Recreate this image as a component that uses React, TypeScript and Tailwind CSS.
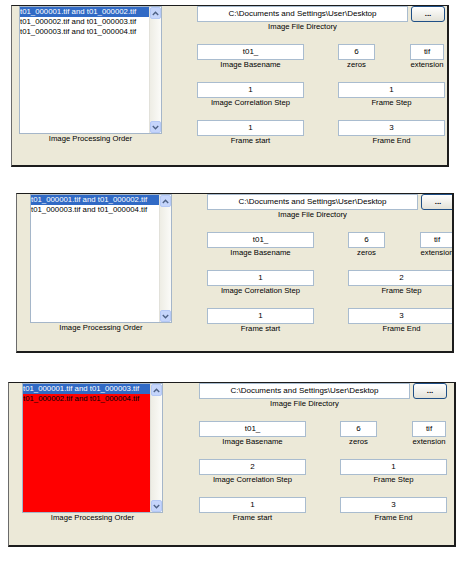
import React from 'react';

type PanelProps = {
  className: string;
  padLeft: string;
  listWidth: string;
  listHeight: string;
  gap: string;
  items: string[];
  red?: boolean;
  corrStep: string;
  frameStep: string;
  frameStart: string;
  frameEnd: string;
};

const font = { fontFamily: '"Liberation Sans", Arial, sans-serif' };

const Field: React.FC<{ value: string; className?: string }> = ({ value, className = '' }) => (
  <div
    className={`h-[16px] bg-white border border-[#a9bccf] flex items-center justify-center text-[8px] leading-none text-black whitespace-nowrap overflow-hidden ${className}`}
  >
    {value}
  </div>
);

const Label: React.FC<{ children: React.ReactNode }> = ({ children }) => (
  <div className="h-[10px] text-[7.7px] leading-[10px] text-center text-black whitespace-nowrap">{children}</div>
);

const Chevron: React.FC<{ down?: boolean }> = ({ down }) => (
  <svg width="7" height="5" viewBox="0 0 7 5">
    <path
      d={down ? 'M0.8 1 L3.5 3.7 L6.2 1' : 'M0.8 4 L3.5 1.3 L6.2 4'}
      fill="none"
      stroke="#4d6185"
      strokeWidth="1.4"
    />
  </svg>
);

const ScrollButton: React.FC<{ down?: boolean }> = ({ down }) => (
  <div className="h-[12px] w-[11px] mx-auto rounded-[2px] bg-[#c5d5fb] border border-[#b4c8f6] flex items-center justify-center">
    <Chevron down={down} />
  </div>
);

const Scrollbar = () => (
  <div className="w-[12px] shrink-0 flex flex-col justify-between bg-gradient-to-r from-[#eeede5] to-[#fbfbf8] border-l border-[#e2e1da]">
    <ScrollButton />
    <ScrollButton down />
  </div>
);

const ListBox: React.FC<{ items: string[]; red?: boolean; height: string }> = ({ items, red, height }) => (
  <div className={`${height} border border-[#a5b6c9] flex ${red ? 'bg-[#ff0000]' : 'bg-white'}`}>
    <div className="flex-1 min-w-0 overflow-hidden">
      {items.map((t, i) => (
        <div
          key={t}
          className={`h-[10px] leading-[10px] text-[7.8px] whitespace-nowrap ${
            i === 0 ? 'bg-[#316ac5] text-white' : 'text-black'
          }`}
        >
          {t}
        </div>
      ))}
    </div>
    <Scrollbar />
  </div>
);

const Panel: React.FC<PanelProps> = ({
  className,
  padLeft,
  listWidth,
  listHeight,
  gap,
  items,
  red,
  corrStep,
  frameStep,
  frameStart,
  frameEnd,
}) => {
  return (
    <div
      className={`${className} ${padLeft} bg-[#ece9d8] border-t border-b-2 border-r-2 border-l border-t-[#1c1c1c] border-b-[#1c1c1c] border-r-[#1c1c1c] border-l-[#6b6b6b] overflow-hidden flex`}
    >
      <div className={`${listWidth} shrink-0 flex flex-col`}>
        <ListBox items={items} red={red} height={listHeight} />
        <Label>Image Processing Order</Label>
      </div>
      <div className={`${gap} w-[248px] shrink-0 flex flex-col gap-[12px]`}>
        <div className="flex items-start">
          <div className="w-[211px] flex flex-col">
            <Field value="C:\Documents and Settings\User\Desktop" className="h-[15px]" />
            <Label>Image File Directory</Label>
          </div>
          <button className="ml-[3px] w-[34px] h-[16px] rounded-[3px] border border-[#1f4f86] bg-gradient-to-b from-white to-[#e3e2d8] text-[8px] font-bold leading-none text-black flex items-center justify-center">
            ...
          </button>
        </div>
        <div className="flex">
          <div className="w-[107px]">
            <Field value="t01_" />
            <Label>Image Basename</Label>
          </div>
          <div className="ml-[34px] w-[37px]">
            <Field value="6" />
            <Label>zeros</Label>
          </div>
          <div className="ml-[35px] w-[34px]">
            <Field value="tif" />
            <Label>extension</Label>
          </div>
        </div>
        <div className="flex">
          <div className="w-[107px]">
            <Field value={corrStep} />
            <Label>Image Correlation Step</Label>
          </div>
          <div className="ml-[34px] w-[107px]">
            <Field value={frameStep} />
            <Label>Frame Step</Label>
          </div>
        </div>
        <div className="flex">
          <div className="w-[107px]">
            <Field value={frameStart} />
            <Label>Frame start</Label>
          </div>
          <div className="ml-[34px] w-[107px]">
            <Field value={frameEnd} />
            <Label>Frame End</Label>
          </div>
        </div>
      </div>
    </div>
  );
};

export default function App() {
  return (
    <div className="min-h-screen w-[470px] bg-white flex flex-col" style={font}>
      <Panel
        className="mt-[5px] ml-[11px] w-[438px] h-[162px]"
        padLeft="pl-[7px]"
        listWidth="w-[143px]"
        listHeight="h-[128px]"
        gap="ml-[35px]"
        items={[
          't01_000001.tif and t01_000002.tif',
          't01_000002.tif and t01_000003.tif',
          't01_000003.tif and t01_000004.tif',
        ]}
        corrStep="1"
        frameStep="1"
        frameStart="1"
        frameEnd="3"
      />
      <Panel
        className="mt-[26px] ml-[16px] w-[438px] h-[160px]"
        padLeft="pl-[13px]"
        listWidth="w-[142px]"
        listHeight="h-[129px]"
        gap="ml-[35px]"
        items={['t01_000001.tif and t01_000002.tif', 't01_000003.tif and t01_000004.tif']}
        corrStep="1"
        frameStep="2"
        frameStart="1"
        frameEnd="3"
      />
      <Panel
        className="mt-[29px] ml-[8px] w-[448px] h-[165px]"
        padLeft="pl-[13px]"
        listWidth="w-[141px]"
        listHeight="h-[130px]"
        gap="ml-[36px]"
        items={['t01_000001.tif and t01_000003.tif', 't01_000002.tif and t01_000004.tif']}
        red
        corrStep="2"
        frameStep="1"
        frameStart="1"
        frameEnd="3"
      />
    </div>
  );
}
